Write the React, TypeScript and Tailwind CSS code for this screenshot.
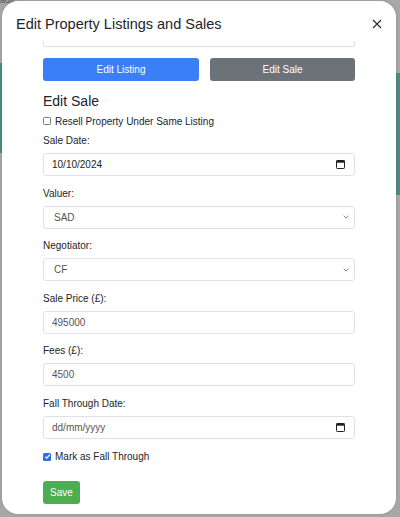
type Field = {
  label: string;
  value: string;
  kind: "date" | "select" | "text";
  placeholder?: boolean;
};

const fields: Field[] = [
  { label: "Sale Date:", value: "10/10/2024", kind: "date" },
  { label: "Valuer:", value: "SAD", kind: "select" },
  { label: "Negotiator:", value: "CF", kind: "select" },
  { label: "Sale Price (£):", value: "495000", kind: "text" },
  { label: "Fees (£):", value: "4500", kind: "text" },
  { label: "Fall Through Date:", value: "dd/mm/yyyy", kind: "date", placeholder: true },
];

function CalendarIcon() {
  return (
    <svg width="9" height="9" viewBox="0 0 9 9" fill="none">
      <rect x="0.5" y="0.5" width="8" height="8" rx="0.8" stroke="#1f1f1f" strokeWidth="1" />
      <rect x="0.5" y="0.5" width="8" height="2.2" fill="#1f1f1f" />
    </svg>
  );
}

function Chevron() {
  return (
    <svg width="6" height="4" viewBox="0 0 6 4" fill="none">
      <path d="M0.6 0.7 L3 3.1 L5.4 0.7" stroke="#6b7280" strokeWidth="0.9" />
    </svg>
  );
}

function Checkbox({ checked }: { checked?: boolean }) {
  if (checked) {
    return (
      <span className="flex h-[8px] w-[8px] shrink-0 items-center justify-center rounded-[1.5px] bg-[#2f6fe0]">
        <svg width="7" height="7" viewBox="0 0 7 7" fill="none">
          <path d="M1.2 3.6 L2.8 5.1 L5.8 1.6" stroke="white" strokeWidth="1.3" />
        </svg>
      </span>
    );
  }
  return (
    <span className="h-[8px] w-[8px] shrink-0 rounded-[1.5px] border border-[#767676] bg-white" />
  );
}

export default function App() {
  return (
    <div
      className="relative h-[517px] w-[400px] overflow-hidden bg-[#a7a7a7] pt-[1px] pl-[2px]"
      style={{ fontFamily: '"Liberation Sans", Arial, sans-serif' }}
    >
      {/* page behind the overlay */}
      <div className="absolute top-[63px] left-0 h-[90px] w-[10px] bg-[#4f8984]" />
      <div className="absolute top-[73px] right-0 h-[122px] w-[10px] bg-[#4f8984]" />
      <div className="absolute top-[-5px] left-0 text-[9px] leading-[10px] text-[#555]">ault</div>

      <div className="relative flex h-[513px] w-[394px] flex-col rounded-[16px] bg-white shadow-[0_0_3px_rgba(0,0,0,0.15)]">
        {/* Header */}
        <div className="flex h-[40px] items-start justify-between pt-[15px] pr-[14px] pl-[14px]">
          <h1 className="text-[14.5px] leading-[16px] font-normal text-[#212529]">
            Edit Property Listings and Sales
          </h1>
          <svg width="10" height="10" viewBox="0 0 10 10" className="mt-[3px]">
            <path d="M1 1 L9 9 M9 1 L1 9" stroke="#333" strokeWidth="1.3" />
          </svg>
        </div>

        {/* Body */}
        <div className="flex flex-col px-[41px]">
          <div className="h-[6px] w-full rounded-b-[3px] border-x border-b border-[#dee2e6]" />

          <div className="mt-[11px] flex gap-[11px]">
            <button className="h-[23px] w-[156px] rounded-[3px] bg-[#3a7ff6] text-[10px] text-white">
              Edit Listing
            </button>
            <button className="h-[23px] flex-1 rounded-[3px] bg-[#6c7378] text-[10px] text-white">
              Edit Sale
            </button>
          </div>

          <h2 className="mt-[12px] text-[14px] leading-[16px] font-medium text-[#212529]">
            Edit Sale
          </h2>

          <label className="mt-[5px] flex h-[14px] items-center gap-[4px] text-[10px] text-[#212529]">
            <Checkbox />
            Resell Property Under Same Listing
          </label>

          <div className="mt-[6px] flex flex-col gap-[10.6px]">
            {fields.map((f) => (
              <div key={f.label} className="flex flex-col">
                <span className="mb-[5px] text-[10px] leading-[14px] text-[#212529]">
                  {f.label}
                </span>
                <div
                  className={`flex h-[23px] items-center justify-between rounded-[3px] border border-[#dee2e6] bg-white text-[10px] ${
                    f.kind === "select" ? "pr-[5px] pl-[10px]" : "pr-[9px] pl-[8px]"
                  } ${f.placeholder ? "text-[#555]" : f.kind === "date" ? "text-[#222]" : "text-[#555]"}`}
                >
                  <span>{f.value}</span>
                  {f.kind === "date" && <CalendarIcon />}
                  {f.kind === "select" && <Chevron />}
                </div>
              </div>
            ))}
          </div>

          <label className="mt-[11px] flex h-[14px] items-center gap-[4px] text-[10px] text-[#212529]">
            <Checkbox checked />
            Mark as Fall Through
          </label>

          <div className="mt-[15px]">
            <button className="h-[23px] w-[37px] rounded-[3px] bg-[#4cae50] text-[10px] text-white">
              Save
            </button>
          </div>
        </div>
      </div>
    </div>
  );
}
